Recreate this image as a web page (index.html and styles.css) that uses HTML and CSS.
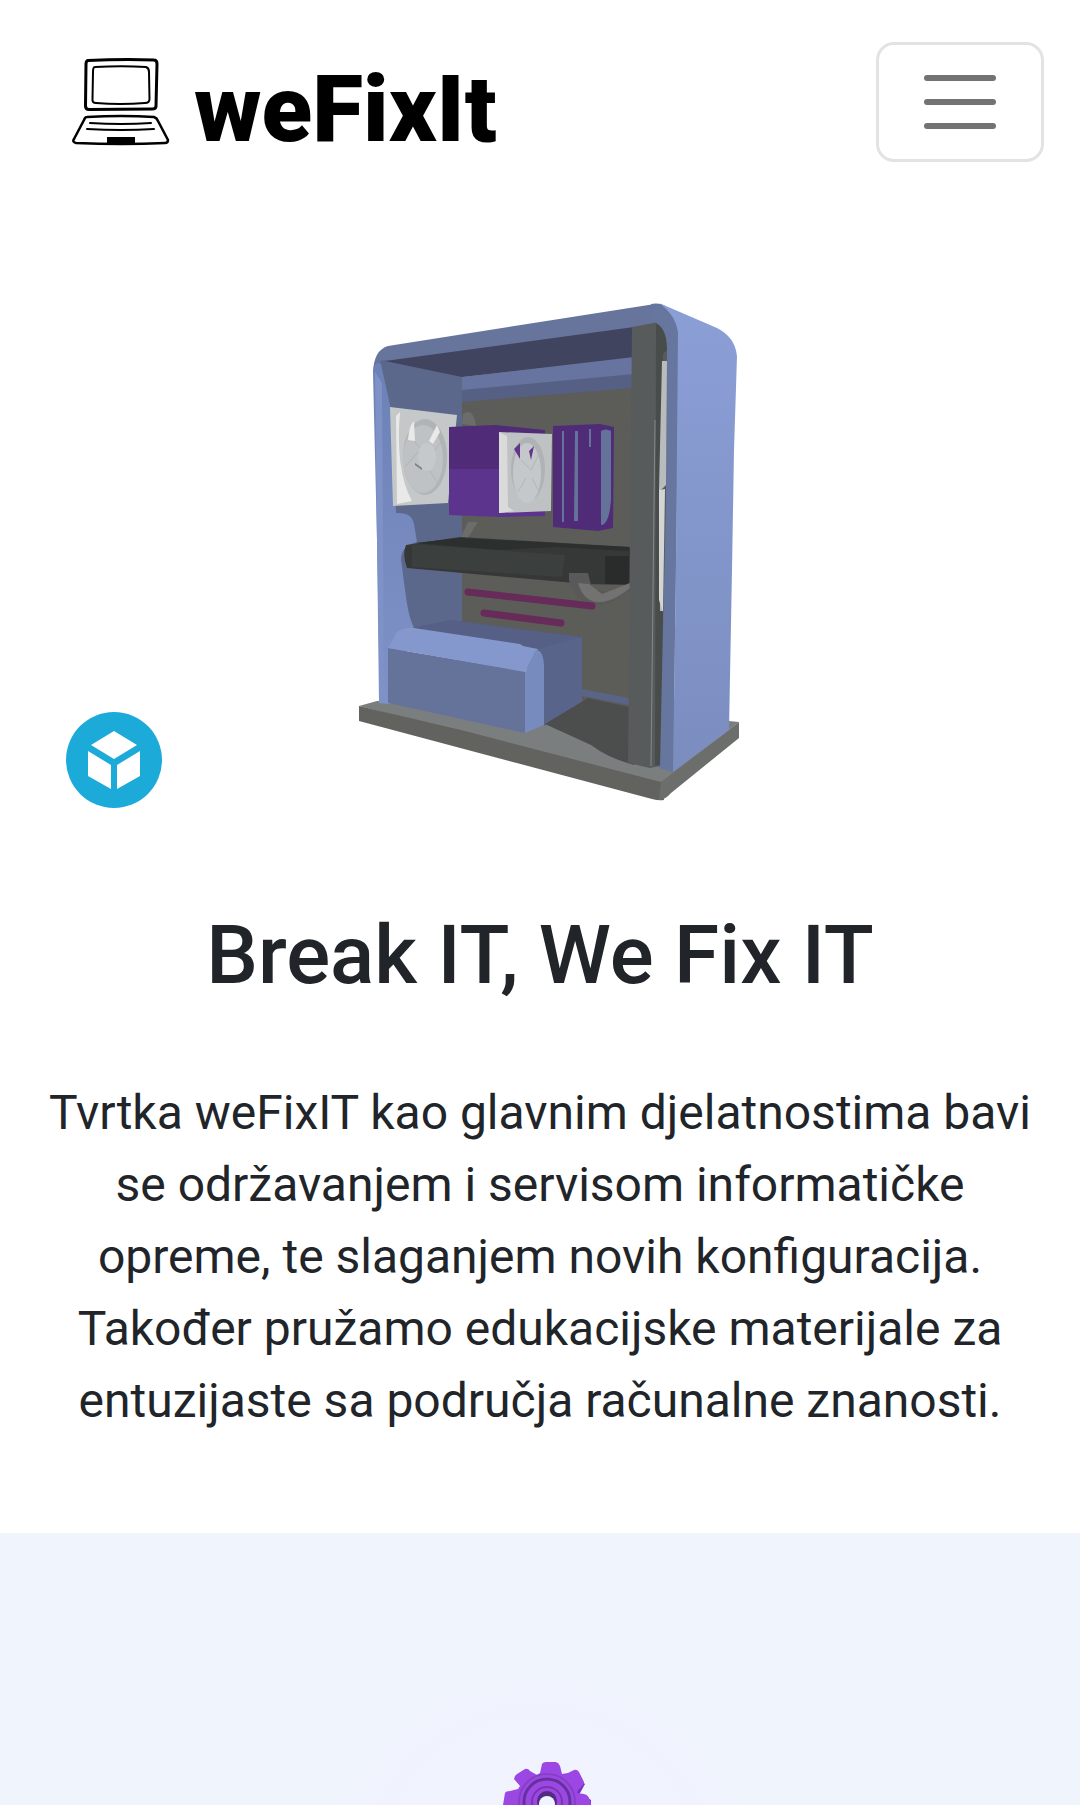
FILE: index.html
```html
<!DOCTYPE html>
<html lang="hr">
<head>
<meta charset="utf-8">
<meta name="viewport" content="width=device-width, initial-scale=1">
<title>weFixIt</title>
<link rel="stylesheet" href="styles.css">
</head>
<body>
<header class="navbar">
  <a class="brand" href="#">
    <svg class="brand-icon" viewBox="0 0 100 88" aria-hidden="true">
      <g fill="none" stroke="#000" stroke-linejoin="round" stroke-linecap="round">
        <path stroke-width="3" d="M16 2.500Q50 1 82 2Q85 2 85 6L84 48Q84 51 80 51L17 51.500Q13.500 51.500 13.500 48L14 6Q14 3 16 2.500Z"/>
        <path stroke-width="2" d="M23 9Q50 7.500 74 9Q77 10 77 14L77.500 41Q77.500 45 73 45Q48 47 24 45Q20 45 20.500 41L21 14Q21 9 23 9Z"/>
        <path stroke-width="2.500" d="M15 59Q50 57 82 59Q85 60 86 63L96 82Q96 85 93 85Q50 87 4 85Q0 84 2 81L12 62Q13 59 15 59Z"/>
        <path stroke-width="2" d="M18 65Q50 67 79 65M15 71Q50 73 82 71"/>
      </g>
      <path d="M35 79H63V86H35Z"/>
    </svg>
    <span class="brand-name">weFixIt</span>
  </a>
  <button class="menu-toggle" type="button" aria-label="Izbornik">
    <svg viewBox="0 0 30 30" aria-hidden="true"><path d="M4 7h22M4 15h22M4 23h22" fill="none" stroke="#737373" stroke-width="2" stroke-linecap="round"/></svg>
  </button>
</header>
<main>
  <section class="hero">
    <div class="viewer">
      <svg class="computer" viewBox="330 290 420 520" role="img" aria-label="3D model računala">
        <defs>
          <linearGradient id="side" x1="0" y1="0" x2="0" y2="1"><stop offset="0" stop-color="#8b9fd7"/><stop offset="1" stop-color="#7b8dbf"/></linearGradient>
          <linearGradient id="wall" x1="0" y1="0" x2="0" y2="1"><stop offset="0" stop-color="#6c81b6"/><stop offset="1" stop-color="#7f92c7"/></linearGradient>
        </defs>
        <path fill="#7b7e7e" d="M359 706L377 701L560 690L729 721L739 722L661 783Z"/>
        <path fill="#62635f" d="M359 706L465 731L661 782L664 800Q659 801 652 799L359 721Z"/>
        <path fill="#6c6e6b" d="M661 782L739 722V738L671 793Q665 800 659 800Z"/>
        <path fill="#67759c" d="M373 372Q374 350 388 346L655 304Q672 301 679 335L676 560L673 772L650 764L640 380L386 380Z"/>
        <path fill="#5b678b" d="M380 361L385 360L463 376L466 625L402 640Z"/>
        <path fill="#5c5c58" d="M462 401L634 383V718L582 705L462 625Z"/>
        <path fill="#40445e" d="M385 361L634 327V358L462 377Z"/>
        <path fill="#67749f" d="M462 377L634 357V375L462 391Z"/>
        <path fill="#556084" d="M462 390L634 374V388L462 402Z"/>
        <path fill="url(#wall)" d="M373 372Q375 360 381 364L391 410L396 513Q412 512 414 524L417 542Q402 545 401 559L405 590Q408 616 414 628L390 704L379 703L377 540Z"/>
        <path fill="#7f92c7" d="M375 372L382 383L384 695L380 702L377 540Z"/>
        <path fill="#6c6d6b" d="M463 414Q473 407 476 426L462 424ZM468 522H478L466 541H459Z"/>
        <g>
          <path fill="#c4c8c8" d="M390 407L457 415L448 503L393 506Z"/>
          <path fill="#e9e9e8" d="M396 416L400 412Q395 470 412 501L397 504Z"/>
          <ellipse cx="425" cy="457" rx="22" ry="38" fill="#b0b4b5"/>
          <ellipse cx="423" cy="459" rx="20" ry="34" fill="#bfc2c4"/>
          <path fill="#e9e9e8" d="M408 440Q409 425 414 421L415 441ZM429 441L437 425L440 432L433 444Z"/>
          <path stroke="#b0b4b6" stroke-width="1" fill="none" d="M420 450L405 467M427 467L438 483M433 452L443 440M414 441L422 450"/>
          <ellipse cx="427" cy="457" rx="9" ry="14" fill="#c6c9ca"/>
          <path fill="#7a7e7f" d="M415 463l7 5v2l-7-5z"/>
        </g>
        <path fill="#4f2b78" d="M449 427L495 425L545 430V470H449Z"/>
        <path fill="#5c348e" d="M449 469H500V512L545 510V516L500 517L449 515Z"/>
        <path fill="#bfc2c3" d="M499 432L552 434L551 511L499 513Z"/>
        <path fill="#d9dbda" d="M499 432L507 436L508 507L514 511L499 513Z"/>
        <ellipse cx="528" cy="469" rx="17" ry="32" fill="#b0b3b5"/>
        <ellipse cx="527" cy="473" rx="14" ry="30" fill="#c5c8cb"/>
        <path fill="#62358b" d="M514 449L520 443V459ZM529 451L534 446L531 460Z"/>
        <path stroke="#b2b6b9" fill="none" stroke-width="1" d="M521 460L531 470L539 454M526 478L518 492M532 478L538 490"/>
        <path fill="#4f2b78" d="M553 426L600 424L614 427L613 528L598 531L553 527Z"/>
        <path stroke="#65739a" fill="none" stroke-width="2" d="M563 431V522M590 429V447"/>
        <path fill="#65739a" d="M575 431H578V521H574ZM601 431Q606 428 611 431V500Q609 525 601 525Z"/>
        <path fill="#353836" d="M406 545L460 537L630 547V585L586 584L407 568Q402 555 406 545Z"/>
        <path fill="#2b2f2e" d="M415 543L460 538L629 547V551L555 547L500 550Z"/>
        <path fill="#3b3f3d" d="M412 544L565 555L562 577L412 567Z"/>
        <path fill="#292c2b" d="M605 556H629V584H605Z"/>
        <path fill="#59595a" d="M569 573H588L592 589L611 592L630 583V590Q609 608 592 604Q573 600 569 580Z"/>
        <path fill="#737271" d="M578 583L589 584L602 594L630 583V588Q610 604 596 602Q583 600 578 583Z"/>
        <path stroke="#662b59" fill="none" stroke-width="7" stroke-linecap="round" d="M468 592L592 606M484 613L561 623"/>
        <path fill="#565f85" d="M412 628L450 620L582 637L545 650Z"/>
        <path fill="#59648a" d="M538 649L582 637V708L544 726Z"/>
        <path fill="#596487" d="M582 689L634 699V706L582 696Z"/>
        <path fill="#4c4e4e" d="M545 724L588 698L634 708V765Q608 758 591 745Z"/>
        <path fill="#65739a" d="M388 648L525 671V733L388 703Z"/>
        <path fill="#8498cd" d="M388 648L397 632Q405 627 414 628L520 644L523 646L538 649L525 672Z"/>
        <path fill="#788bbe" d="M525 672L536 650Q543 650 544 665V725L525 733Z"/>
        <path fill="#585b5b" d="M632 327L659 322Q667 325 667 347L664 765L650 768L628 763Z"/>
        <path fill="#484d4b" d="M656 324Q668 328 667 350L663 354V764L655 766Z"/>
        <path fill="#b8bcbd" d="M662 361H667L666 485L661 490L663 611H660L659 490Z"/>
        <path fill="#d3d5d5" d="M659 490L665 489L663 612L659 600Z"/>
        <path fill="none" stroke="#858988" stroke-width="1" d="M655 420L651 766"/>
        <path fill="#67769f" d="M651 304Q671 300 679 330L676 560L673 772L660 768L663 625L668 430L667 349Q667 327 653 321Z"/>
        <path fill="url(#side)" d="M659 303L717 328Q735 337 737 356L734 450L732 570L729 730L673 772L676 560L678 333Q676 315 659 303Z"/>
      </svg>
      <a class="model-badge" href="#" aria-label="Sketchfab">
        <svg viewBox="0 0 96 96" aria-hidden="true"><circle cx="48" cy="48" r="48" fill="#1caad9"/><path fill="#fff" d="M48 19L71 33L48 47L25 33ZM22 39L45 53V77L22 64ZM74 39L51 53V77L74 64Z"/></svg>
      </a>
    </div>
    <h1>Break IT, We Fix IT</h1>
    <p>Tvrtka weFixIT kao glavnim djelatnostima bavi se održavanjem i servisom informatičke opreme, te slaganjem novih konfiguracija. Također pružamo edukacijske materijale za entuzijaste sa područja računalne znanosti.</p>
  </section>
  <section class="services">
    <svg class="gear" viewBox="500 1761 92 44" aria-hidden="true">
      <path fill="#7434bd" d="M575 1775L585 1784L579 1795L573 1792ZM583 1795L591 1800V1805H580Z"/>
      <path fill="#9c46e3" d="M503 1805L505 1793Q506 1791 510 1791L518 1789L520 1786L514 1779Q514 1776 517 1774L525 1769Q528 1768 530 1771L537 1775L540 1773L542 1764Q543 1762 546 1762H556Q559 1763 560 1766L562 1774L568 1773L574 1770Q577 1769 579 1772L584 1782Q584 1785 578 1790L577 1793L584 1794Q590 1795 591 1805Z"/>
      <g fill="none"><circle cx="547" cy="1802" r="28" stroke="#8640c7" stroke-width="2"/><circle cx="547" cy="1802" r="23" stroke="#65319c" stroke-width="3"/><circle cx="547" cy="1802" r="15" stroke="#7638ad" stroke-width="2"/></g>
      <circle cx="547" cy="1801" r="10" fill="#532b82"/><circle cx="547" cy="1804" r="8" fill="#f1f3fd"/>
    </svg>
  </section>
</main>
</body>
</html>
```
FILE: styles.css
```css
* { box-sizing: border-box; }

body {
  margin: 0;
  background: #fff;
  color: #212529;
  font-family: Roboto, "Liberation Sans", sans-serif;
  font-size: 48px;
  line-height: 72px;
}

svg { display: block; }

.navbar {
  display: flex;
  align-items: center;
  justify-content: space-between;
  padding: 42px 36px 42px 72px;
}

.brand {
  display: flex;
  align-items: center;
  gap: 22px;
  color: #000;
  text-decoration: none;
}

.brand-icon { width: 100px; }

.brand-name {
  padding-top: 16px;
  font-size: 93px;
  font-weight: 900;
  line-height: 96px;
}

.menu-toggle {
  padding: 12px 36px;
  border: 3px solid #e3e3e3;
  border-radius: 18px;
  background: none;
}

.menu-toggle svg { width: 90px; }

.hero {
  padding: 86px 36px 96px;
  text-align: center;
}

.viewer {
  position: relative;
  display: flex;
  justify-content: center;
}

.computer { width: 420px; }

.model-badge {
  position: absolute;
  left: 30px;
  bottom: 2px;
}

.model-badge svg { width: 96px; }

h1 {
  margin: 96px 0 73px;
  font-size: 82px;
  font-weight: 500;
  line-height: 98px;
}

p { margin: 0; }

.services {
  display: flex;
  justify-content: center;
  padding: 228px 0 0 12px;
  background: radial-gradient(circle at 50% 130%, #f1f3fd 0, #f0f3fd 180px, #f0f4fd 230px);
}

.gear { width: 92px; }
```
